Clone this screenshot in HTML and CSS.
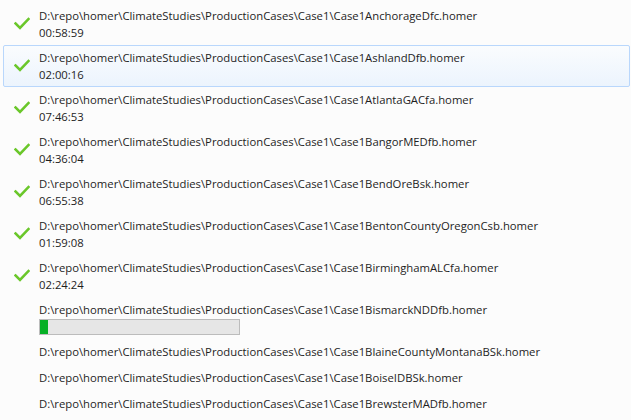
FILE: index.html
```html
<!DOCTYPE html>
<html>
<head>
<meta charset="utf-8">
<link rel="stylesheet" href="styles.css">
</head>
<body>
<ul class="list">
  <li class="row done">
    <svg class="check" viewBox="0 0 16 14" width="16" height="14"><path d="M1.5 6.5 L6 11 L14.5 2" /></svg>
    <div class="info"><div class="path">D:\repo\homer\ClimateStudies\ProductionCases\Case1\Case1AnchorageDfc.homer</div><div class="time">00:58:59</div></div>
  </li>
  <li class="row done selected">
    <svg class="check" viewBox="0 0 16 14" width="16" height="14"><path d="M1.5 6.5 L6 11 L14.5 2" /></svg>
    <div class="info"><div class="path">D:\repo\homer\ClimateStudies\ProductionCases\Case1\Case1AshlandDfb.homer</div><div class="time">02:00:16</div></div>
  </li>
  <li class="row done">
    <svg class="check" viewBox="0 0 16 14" width="16" height="14"><path d="M1.5 6.5 L6 11 L14.5 2" /></svg>
    <div class="info"><div class="path">D:\repo\homer\ClimateStudies\ProductionCases\Case1\Case1AtlantaGACfa.homer</div><div class="time">07:46:53</div></div>
  </li>
  <li class="row done">
    <svg class="check" viewBox="0 0 16 14" width="16" height="14"><path d="M1.5 6.5 L6 11 L14.5 2" /></svg>
    <div class="info"><div class="path">D:\repo\homer\ClimateStudies\ProductionCases\Case1\Case1BangorMEDfb.homer</div><div class="time">04:36:04</div></div>
  </li>
  <li class="row done">
    <svg class="check" viewBox="0 0 16 14" width="16" height="14"><path d="M1.5 6.5 L6 11 L14.5 2" /></svg>
    <div class="info"><div class="path">D:\repo\homer\ClimateStudies\ProductionCases\Case1\Case1BendOreBsk.homer</div><div class="time">06:55:38</div></div>
  </li>
  <li class="row done">
    <svg class="check" viewBox="0 0 16 14" width="16" height="14"><path d="M1.5 6.5 L6 11 L14.5 2" /></svg>
    <div class="info"><div class="path">D:\repo\homer\ClimateStudies\ProductionCases\Case1\Case1BentonCountyOregonCsb.homer</div><div class="time">01:59:08</div></div>
  </li>
  <li class="row done">
    <svg class="check" viewBox="0 0 16 14" width="16" height="14"><path d="M1.5 6.5 L6 11 L14.5 2" /></svg>
    <div class="info"><div class="path">D:\repo\homer\ClimateStudies\ProductionCases\Case1\Case1BirminghamALCfa.homer</div><div class="time">02:24:24</div></div>
  </li>
  <li class="row running">
    <span class="slot"></span>
    <div class="info"><div class="path">D:\repo\homer\ClimateStudies\ProductionCases\Case1\Case1BismarckNDDfb.homer</div><div class="progress"><div class="fill" style="width:4%"></div></div></div>
  </li>
  <li class="row pending">
    <span class="slot"></span>
    <div class="info"><div class="path">D:\repo\homer\ClimateStudies\ProductionCases\Case1\Case1BlaineCountyMontanaBSk.homer</div></div>
  </li>
  <li class="row pending">
    <span class="slot"></span>
    <div class="info"><div class="path">D:\repo\homer\ClimateStudies\ProductionCases\Case1\Case1BoiseIDBSk.homer</div></div>
  </li>
  <li class="row pending">
    <span class="slot"></span>
    <div class="info"><div class="path">D:\repo\homer\ClimateStudies\ProductionCases\Case1\Case1BrewsterMADfb.homer</div></div>
  </li>
</ul>
</body>
</html>
```
FILE: styles.css
```css
html, body {
  margin: 0;
  padding: 0;
  background: #fcfcfc;
}
body {
  font-family: "Open Sans", "Noto Sans", sans-serif;
  font-size: 11.3px;
  color: #1e1e1e;
  overflow: hidden;
  height: 420px;
}
.list {
  list-style: none;
  margin: 0;
  padding: 3px 1px 0 3px;
}
.row {
  display: flex;
  align-items: center;
  box-sizing: border-box;
  border: 1px solid transparent;
  border-radius: 2px;
  padding: 3px 0 4px 0;
}
.row.done {
  height: 42px;
}
.row.pending {
  height: 26px;
  padding-bottom: 4px;
}
.row.running {
  height: 42px;
}
.row.selected {
  border-color: #b9d7fc;
  background: linear-gradient(#fafcfe, #ecf4fd);
}
.check {
  flex: none;
  width: 16px;
  height: 14px;
  margin-left: 10px;
  margin-right: 9px;
  fill: none;
  stroke: #6ac72a;
  stroke-width: 2.6;
  stroke-linecap: square;
}
.slot {
  flex: none;
  width: 35px;
}
.info {
  display: flex;
  flex-direction: column;
  align-self: flex-start;
}
.path, .time {
  line-height: 17px;
  white-space: nowrap;
}
.progress {
  box-sizing: border-box;
  margin-top: 1px;
  width: 201px;
  height: 16px;
  border: 1px solid #bcbcbc;
  background: #e6e6e6;
}
.fill {
  height: 100%;
  background: #06b025;
}
```
